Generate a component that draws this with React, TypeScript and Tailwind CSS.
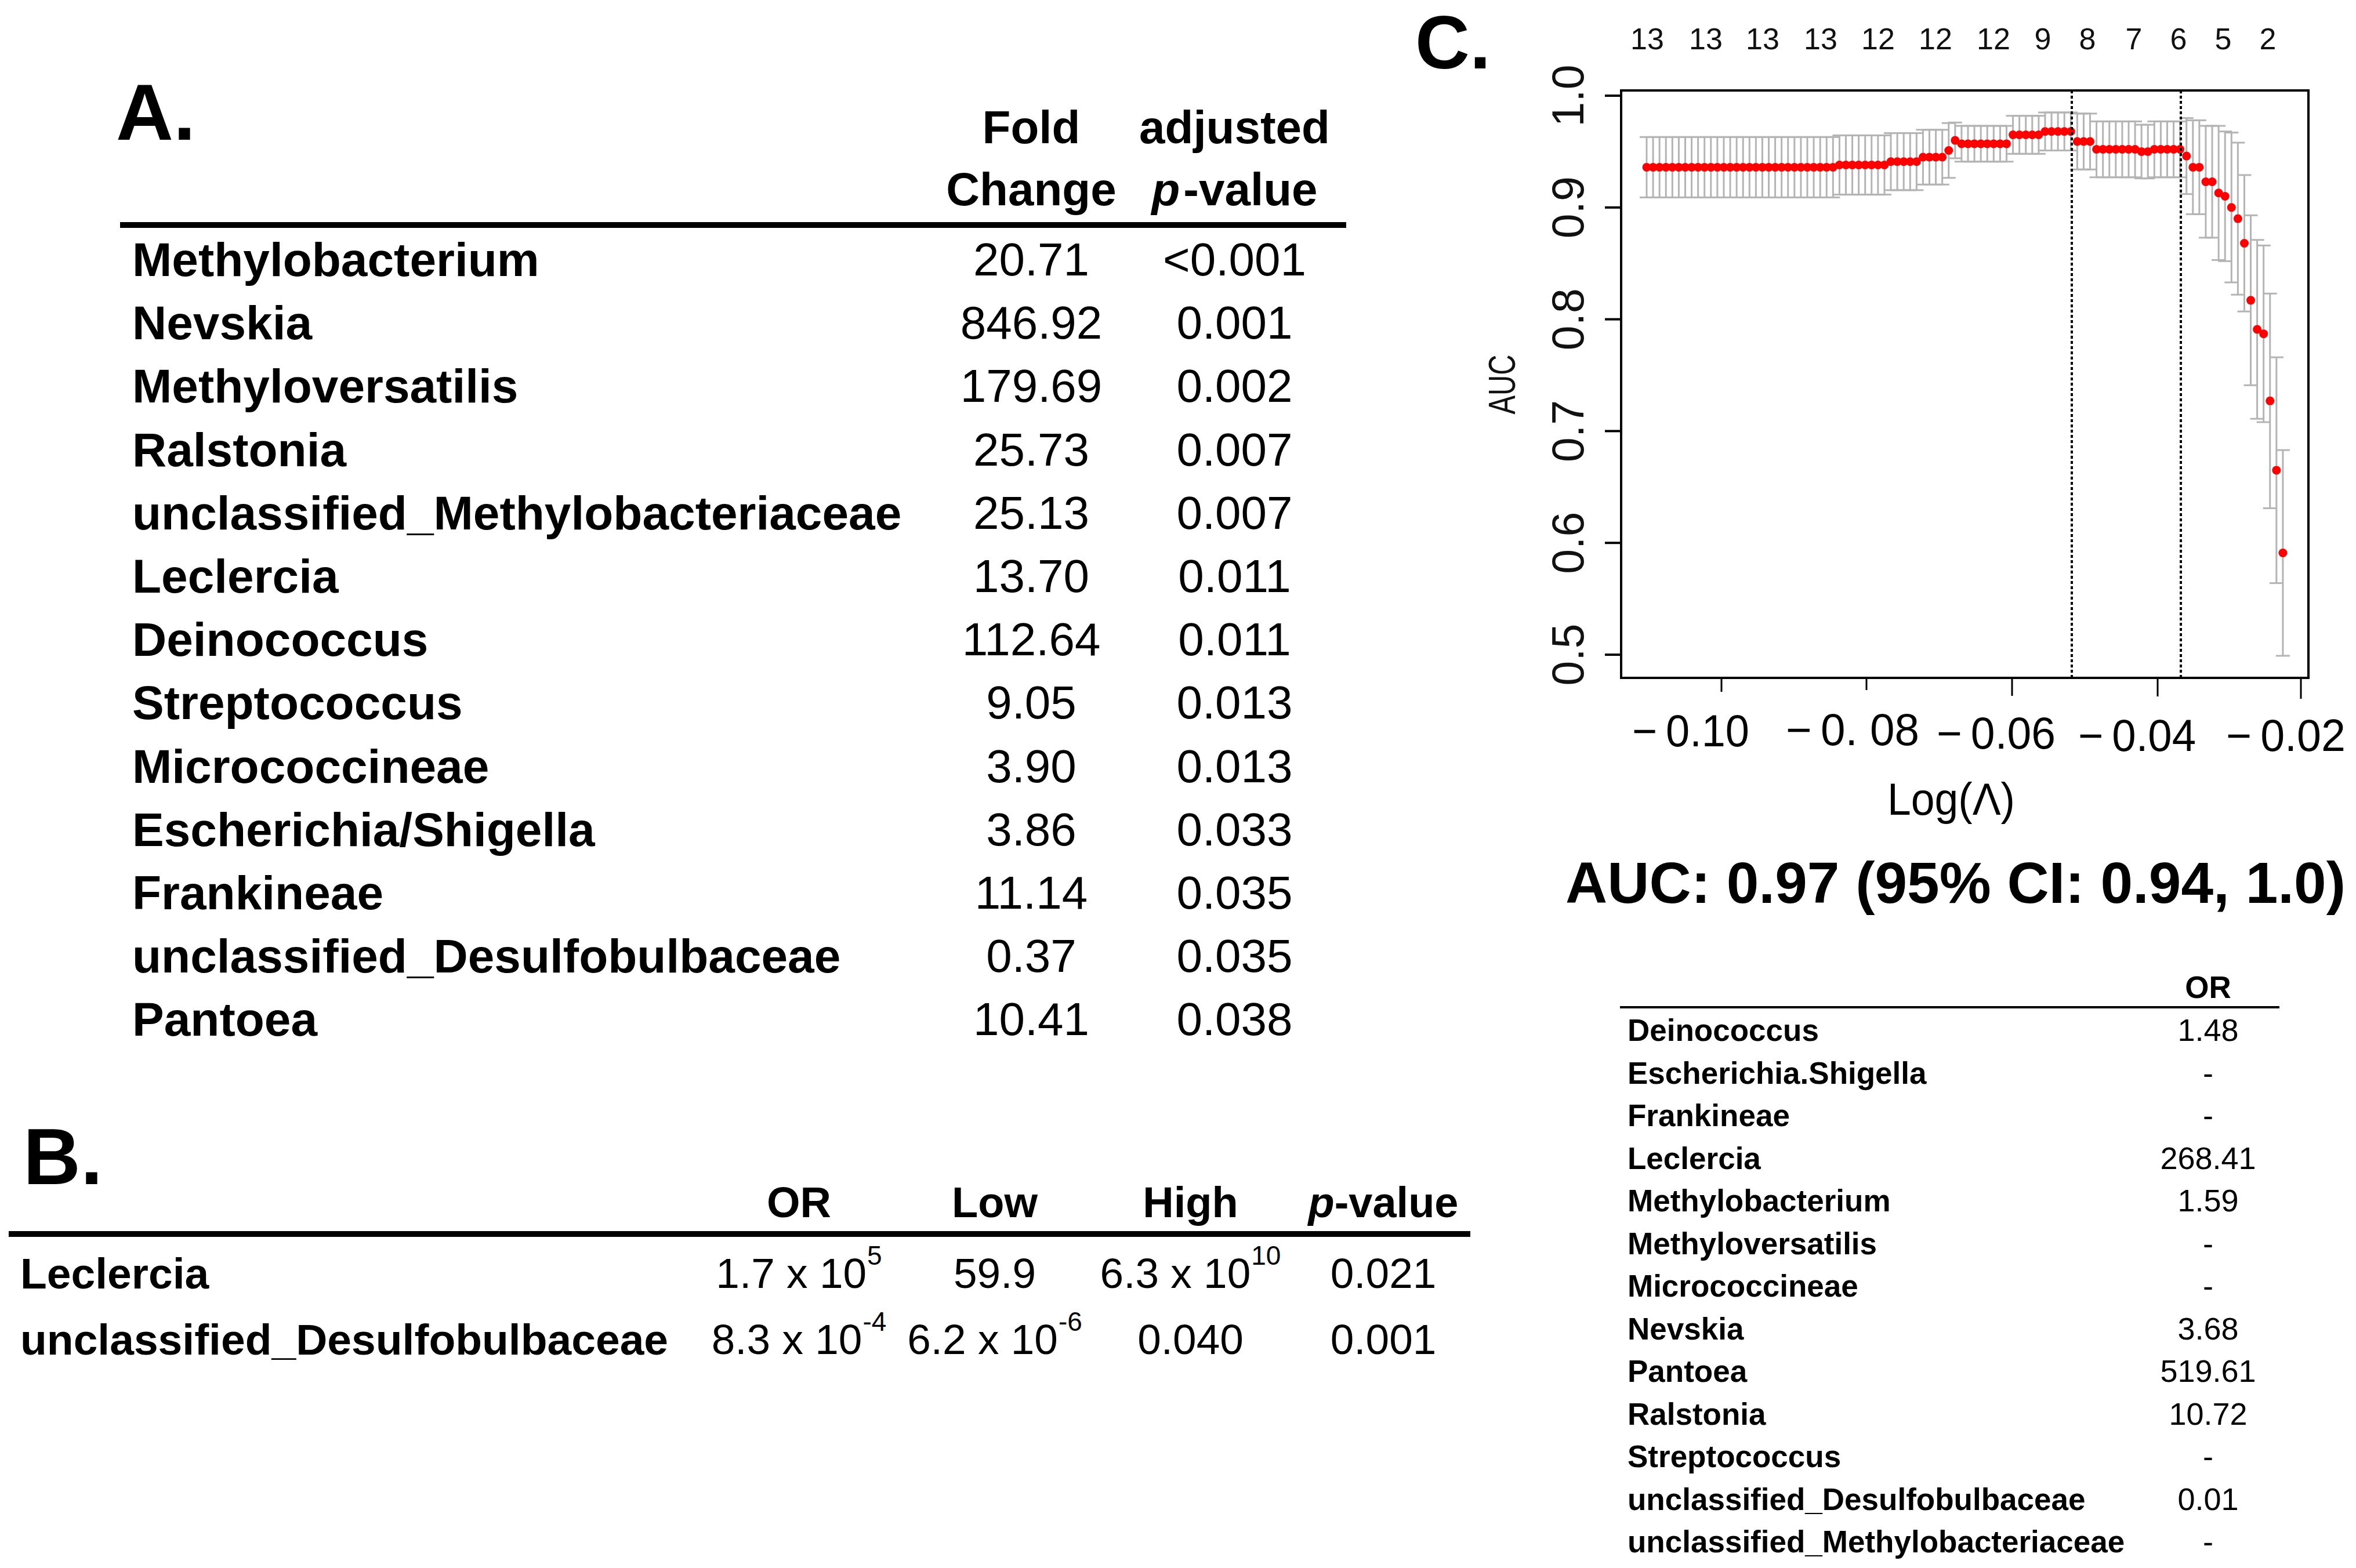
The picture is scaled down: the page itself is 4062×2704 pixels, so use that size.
import React from "react";

const aRows: [string, string, string][] = [
  ["Methylobacterium", "20.71", "<0.001"],
  ["Nevskia", "846.92", "0.001"],
  ["Methyloversatilis", "179.69", "0.002"],
  ["Ralstonia", "25.73", "0.007"],
  ["unclassified_Methylobacteriaceae", "25.13", "0.007"],
  ["Leclercia", "13.70", "0.011"],
  ["Deinococcus", "112.64", "0.011"],
  ["Streptococcus", "9.05", "0.013"],
  ["Micrococcineae", "3.90", "0.013"],
  ["Escherichia/Shigella", "3.86", "0.033"],
  ["Frankineae", "11.14", "0.035"],
  ["unclassified_Desulfobulbaceae", "0.37", "0.035"],
  ["Pantoea", "10.41", "0.038"],
];

const orRows: [string, string][] = [
  ["Deinococcus", "1.48"],
  ["Escherichia.Shigella", "-"],
  ["Frankineae", "-"],
  ["Leclercia", "268.41"],
  ["Methylobacterium", "1.59"],
  ["Methyloversatilis", "-"],
  ["Micrococcineae", "-"],
  ["Nevskia", "3.68"],
  ["Pantoea", "519.61"],
  ["Ralstonia", "10.72"],
  ["Streptococcus", "-"],
  ["unclassified_Desulfobulbaceae", "0.01"],
  ["unclassified_Methylobacteriaceae", "-"],
];

function buildPoints(): [number, number][] {
  const p: [number, number][] = [];
  const add = (n: number, v: number, se: number) => {
    for (let k = 0; k < n; k++) p.push([v, se]);
  };
  add(30, 0.936, 0.027);
  add(8, 0.938, 0.0265);
  add(5, 0.941, 0.0255);
  add(4, 0.945, 0.0245);
  add(1, 0.951, 0.0245);
  add(1, 0.96, 0.016);
  add(8, 0.957, 0.016);
  add(5, 0.965, 0.017);
  add(5, 0.968, 0.017);
  add(3, 0.959, 0.025);
  add(7, 0.952, 0.025);
  add(2, 0.95, 0.024);
  add(5, 0.952, 0.025);
  add(1, 0.946, 0.034);
  add(2, 0.936, 0.042);
  add(2, 0.923, 0.05);
  add(1, 0.913, 0.06);
  add(1, 0.91, 0.058);
  add(1, 0.9, 0.067);
  add(1, 0.89, 0.068);
  add(1, 0.868, 0.061);
  add(1, 0.817, 0.076);
  add(1, 0.791, 0.08);
  add(1, 0.787, 0.079);
  add(1, 0.727, 0.096);
  add(1, 0.665, 0.101);
  add(1, 0.591, 0.092);
  return p;
}

const Y = (v: number) => 165 + (1 - v) * 1928;
const FONT = "'Liberation Sans', Arial, sans-serif";

function Plot() {
  const pts = buildPoints();
  const topNums = ["13", "13", "13", "13", "12", "12", "12", "9", "8", "7", "6", "5", "2"];
  const topXs = [2840, 2941, 3039, 3139, 3238, 3337, 3437, 3522, 3599, 3679, 3756, 3833, 3910];
  const yLabels = [1.0, 0.9, 0.8, 0.7, 0.6, 0.5];
  const xTicks: [number, number][] = [
    [2968, 1193],
    [3218, 1190],
    [3469, 1200],
    [3720, 1201],
    [3967, 1205],
  ];
  const xLabels = [
    { t: "\u2212\u20090.10", x: 2814, w: 202, y: 1287 },
    { t: "\u2212\u20090. 08", x: 3079, w: 230, y: 1285 },
    { t: "\u2212\u20090.06", x: 3339, w: 205, y: 1291 },
    { t: "\u2212\u20090.04", x: 3583, w: 203, y: 1295 },
    { t: "\u2212\u20090.02", x: 3838, w: 206, y: 1295 },
  ];
  return (
    <svg
      width={1522}
      height={1440}
      viewBox="2540 0 1522 1440"
      className="shrink-0 block -ml-[40px]"
      fontFamily={FONT}
    >
      {topNums.map((t, i) => (
        <text key={"tn" + i} x={topXs[i]} y={85} fontSize={52} textAnchor="middle" fill="#111">
          {t}
        </text>
      ))}
      {pts.map(([v, se], i) => {
        const x = 2839 + i * 11.08;
        const yu = Y(v + se);
        const yl = Y(v - se);
        return (
          <g key={"eb" + i} stroke="#b4b4b4" strokeWidth={3}>
            <line x1={x} x2={x} y1={yu} y2={yl} />
            <line x1={x - 12} x2={x + 12} y1={yu} y2={yu} />
            <line x1={x - 12} x2={x + 12} y1={yl} y2={yl} />
          </g>
        );
      })}
      {pts.map(([v], i) => (
        <circle key={"pt" + i} cx={2839 + i * 11.08} cy={Y(v)} r={7.5} fill="#ff0000" />
      ))}
      <line x1={3572} x2={3572} y1={156} y2={1169} stroke="#000" strokeWidth={4} strokeDasharray="5 4" />
      <line x1={3760} x2={3760} y1={156} y2={1169} stroke="#000" strokeWidth={4} strokeDasharray="5 4" />
      <rect x={2795} y={156} width={1185} height={1013} fill="none" stroke="#000" strokeWidth={4} />
      {yLabels.map((v) => {
        const y = Y(v);
        return (
          <g key={"yl" + v}>
            <line x1={2767} x2={2795} y1={y} y2={y} stroke="#000" strokeWidth={4} />
            <text
              x={2730}
              y={y}
              fontSize={77}
              textAnchor="middle"
              transform={`rotate(-90 2730 ${y})`}
              fill="#111"
            >
              {v.toFixed(1)}
            </text>
          </g>
        );
      })}
      <text
        x={2612}
        y={663}
        fontSize={64}
        textAnchor="middle"
        textLength={103}
        lengthAdjust="spacingAndGlyphs"
        transform="rotate(-90 2612 663)"
        fill="#111"
      >
        AUC
      </text>
      {xTicks.map(([x, yb]) => (
        <line key={"xt" + x} x1={x} x2={x} y1={1169} y2={yb} stroke="#000" strokeWidth={3} />
      ))}
      {xLabels.map((l) => (
        <text
          key={l.t}
          x={l.x}
          y={l.y}
          fontSize={77}
          textLength={l.w}
          lengthAdjust="spacingAndGlyphs"
          fill="#000"
        >
          {l.t}
        </text>
      ))}
      <text x={3254} y={1405} fontSize={78} textLength={220} lengthAdjust="spacingAndGlyphs" fill="#000">
        Log(Λ)
      </text>
    </svg>
  );
}

function Sci({ m, e }: { m: string; e: string }) {
  return (
    <>
      {m} x 10
      <span className="ml-[1px] text-[46px] leading-none align-[40px]">{e}</span>
    </>
  );
}

export default function App() {
  const bCols = "grid grid-cols-[1195px_335px_340px_335px_330px]";
  return (
    <div className="flex w-[4062px] h-[2704px] overflow-hidden bg-white text-black font-['Liberation_Sans',Arial,sans-serif]">
      {/* Left column: panels A and B */}
      <div className="w-[2440px] shrink-0 flex flex-col">
        {/* Panel A */}
        <div className="ml-[207px] w-[2114px] pt-[125px]">
          <div className="grid grid-cols-[1413px_316px_385px]">
            <div className="-ml-[7px] text-[137px] leading-[137px] font-bold whitespace-nowrap">A.</div>
            <div className="mt-[41px] text-center text-[80px] leading-[107px] font-bold whitespace-nowrap">
              <div>Fold</div>
              <div>Change</div>
            </div>
            <div className="mt-[41px] text-center text-[80px] leading-[107px] font-bold whitespace-nowrap">
              <div>adjusted</div>
              <div>
                <span className="italic">p</span>
                <span className="ml-[6px]">-value</span>
              </div>
            </div>
          </div>
          <div className="mt-[3px] h-[10px] bg-black" />
          <div className="grid grid-cols-[1413px_316px_385px]">
            {aRows.map((r) => (
              <React.Fragment key={r[0]}>
                <div className="pl-[21px] text-[82px] leading-[109.2px] font-bold whitespace-nowrap">{r[0]}</div>
                <div className="text-center text-[80px] leading-[109.2px] whitespace-nowrap">{r[1]}</div>
                <div className="text-center text-[80px] leading-[109.2px] whitespace-nowrap">{r[2]}</div>
              </React.Fragment>
            ))}
          </div>
        </div>

        {/* Panel B */}
        <div className="ml-[15px] mt-[113px]">
          <div className={bCols}>
            <div className="ml-[25px] text-[137px] leading-[137px] font-bold whitespace-nowrap">B.</div>
            <div className="mt-[103px] text-center text-[74px] leading-[90px] font-bold">OR</div>
            <div className="mt-[103px] text-center text-[74px] leading-[90px] font-bold">Low</div>
            <div className="mt-[103px] text-center text-[74px] leading-[90px] font-bold">High</div>
            <div className="mt-[103px] text-center text-[74px] leading-[90px] font-bold whitespace-nowrap">
              <span className="italic">p</span>-value
            </div>
          </div>
          <div className="mt-[4px] h-[10px] w-[2520px] bg-black" />
          <div className={"pt-[6px] " + bCols}>
            <div className="pl-[20px] text-[75px] leading-[114px] font-bold whitespace-nowrap">Leclercia</div>
            <div className="text-center text-[73px] leading-[114px] whitespace-nowrap">
              <Sci m="1.7" e="5" />
            </div>
            <div className="text-center text-[73px] leading-[114px] whitespace-nowrap">59.9</div>
            <div className="text-center text-[73px] leading-[114px] whitespace-nowrap">
              <Sci m="6.3" e="10" />
            </div>
            <div className="text-center text-[73px] leading-[114px] whitespace-nowrap">0.021</div>

            <div className="pl-[20px] text-[75px] leading-[114px] font-bold whitespace-nowrap">
              unclassified_Desulfobulbaceae
            </div>
            <div className="text-center text-[73px] leading-[114px] whitespace-nowrap">
              <Sci m="8.3" e="-4" />
            </div>
            <div className="text-center text-[73px] leading-[114px] whitespace-nowrap">
              <Sci m="6.2" e="-6" />
            </div>
            <div className="text-center text-[73px] leading-[114px] whitespace-nowrap">0.040</div>
            <div className="text-center text-[73px] leading-[114px] whitespace-nowrap">0.001</div>
          </div>
        </div>
      </div>

      {/* Right column: panel C */}
      <div className="w-[1622px] shrink-0 flex flex-col">
        <div className="flex items-start">
          <div className="mt-[8px] w-[140px] shrink-0 whitespace-nowrap text-[130px] leading-[130px] font-bold">
            C.
          </div>
          <Plot />
        </div>
        <div className="mt-[32px] ml-[259px] whitespace-nowrap text-[100px] leading-[100px] font-bold">
          AUC: 0.97 (95% CI: 0.94, 1.0)
        </div>
        <div className="mt-[101px] ml-[353px] w-[1141px]">
          <div className="grid grid-cols-[887px_254px]">
            <div />
            <div className="text-center text-[53px] leading-[60px] font-bold">OR</div>
          </div>
          <div className="mt-[2px] h-[4px] w-[1137px] bg-black" />
          <div className="mt-[1px] grid grid-cols-[887px_254px]">
            {orRows.map((r) => (
              <React.Fragment key={r[0]}>
                <div className="pl-[13px] text-[53px] leading-[73.5px] font-bold whitespace-nowrap">{r[0]}</div>
                <div className="text-center text-[54px] leading-[73.5px] whitespace-nowrap">{r[1]}</div>
              </React.Fragment>
            ))}
          </div>
        </div>
      </div>
    </div>
  );
}
